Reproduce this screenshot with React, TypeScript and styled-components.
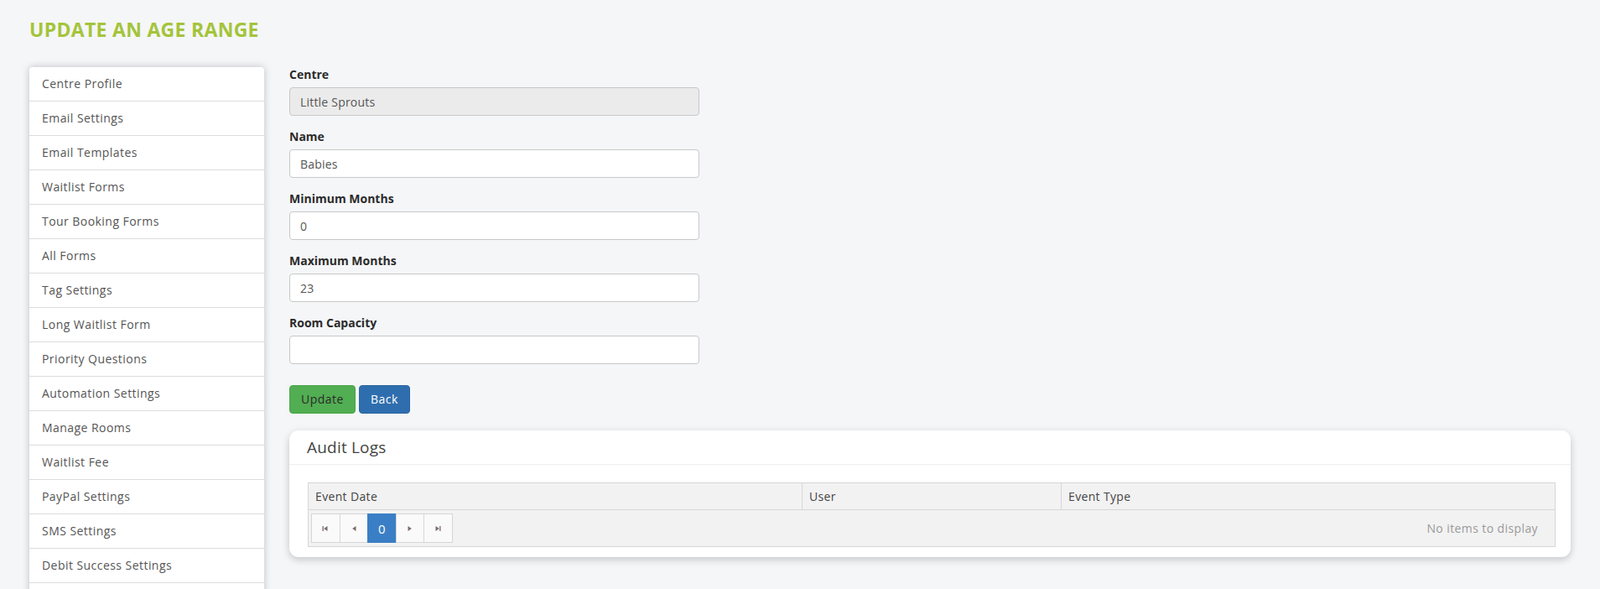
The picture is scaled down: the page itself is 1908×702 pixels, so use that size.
import React from "react";
import styled, { createGlobalStyle } from "styled-components";

const GlobalStyle = createGlobalStyle`
  html, body { margin: 0; padding: 0; }
  body {
    background: #f5f6f8;
    font-family: "Open Sans", "Noto Sans", Arial, sans-serif;
    font-size: 14px;
    color: #333;
  }
  * { box-sizing: border-box; }
`;

const Page = styled.div`
  padding: 0 35px;
`;

const Title = styled.h2`
  margin: 22px 0 32px;
  font-size: 23px;
  line-height: 26px;
  font-weight: 700;
  color: #a4c43a;
  text-transform: uppercase;
  letter-spacing: 0.3px;
`;

const Layout = styled.div`
  display: flex;
  align-items: flex-start;
  gap: 30px;
`;

const SideList = styled.ul`
  flex: 0 0 280px;
  margin: 0;
  padding: 0;
  list-style: none;
  background: #fff;
  border-radius: 4px;
  box-shadow: 0 0 10px rgba(0, 0, 0, 0.22);
`;

const SideItem = styled.li`
  padding: 10px 15px;
  line-height: 20px;
  font-size: 14px;
  letter-spacing: 0.45px;
  color: #555;
  border-bottom: 1px solid #dcdcdc;
  &:first-child { border-radius: 4px 4px 0 0; }
`;

const Main = styled.div`
  flex: 1;
  min-width: 0;
`;

const Form = styled.form`
  width: 489px;
  margin-top: -1px;
`;

const Group = styled.div`
  margin-bottom: 15px;
`;

const Label = styled.label`
  display: block;
  margin-bottom: 5px;
  line-height: 20px;
  font-weight: 700;
  font-size: 14px;
  color: #2b2b2b;
`;

const Input = styled.input`
  display: block;
  width: 100%;
  height: 34px;
  padding: 6px 12px;
  font-family: inherit;
  font-size: 14px;
  letter-spacing: 0.2px;
  color: #555;
  background: ${(p) => (p.disabled ? "#ebebeb" : "#fff")};
  border: 1px solid #c8c8c8;
  border-radius: 4px;
  outline: none;
`;

const Buttons = styled.div`
  display: flex;
  gap: 4px;
  margin-top: 25px;
`;

const Button = styled.button<{ $variant: "success" | "primary" }>`
  height: 34px;
  padding: 6px 13px;
  font-family: inherit;
  font-size: 14px;
  letter-spacing: 0.5px;
  line-height: 20px;
  border-radius: 4px;
  cursor: pointer;
  color: ${(p) => (p.$variant === "success" ? "#2a2a2a" : "#fff")};
  background: ${(p) => (p.$variant === "success" ? "#52ae52" : "#2f6eae")};
  border: 1px solid ${(p) => (p.$variant === "success" ? "#4aa64a" : "#2b66a2")};
`;

const Panel = styled.section`
  margin-top: 20px;
  background: #fff;
  border-radius: 11px;
  box-shadow: 0 3px 10px rgba(0, 0, 0, 0.2);
`;

const PanelHeader = styled.div`
  height: 41px;
  padding: 0 21px;
  display: flex;
  align-items: center;
  font-size: 19px;
  letter-spacing: 0.2px;
  color: #444;
  border-bottom: 1px solid #eeeeee;
`;

const PanelBody = styled.div`
  padding: 21px 18px 12px 22px;
`;

const Grid = styled.div`
  border: 1px solid #d6d6d6;
  background: #f2f2f2;
`;

const HeaderRow = styled.div`
  display: grid;
  grid-template-columns: 588px 309px 1fr;
  border-bottom: 1px solid #d6d6d6;
`;

const HeaderCell = styled.div`
  height: 31px;
  padding: 0 8px;
  display: flex;
  align-items: center;
  font-size: 14px;
  letter-spacing: 0.35px;
  color: #444;
  & + & { border-left: 1px solid #d6d6d6; }
`;

const PagerRow = styled.div`
  display: flex;
  align-items: center;
  justify-content: space-between;
  padding: 4px 20px 4px 3px;
`;

const PagerButtons = styled.div`
  display: flex;
`;

const PageBtn = styled.div<{ $active?: boolean }>`
  width: 34.5px;
  height: 35px;
  display: flex;
  align-items: center;
  justify-content: center;
  font-size: 15px;
  color: ${(p) => (p.$active ? "#fff" : "#7a6b6b")};
  background: ${(p) => (p.$active ? "#3a7fc5" : "#fafafa")};
  border: 1px solid ${(p) => (p.$active ? "#3a7fc5" : "#d6d6d6")};
  & + & { margin-left: -1px; }
`;

const NoItems = styled.div`
  font-size: 14px;
  letter-spacing: 0.4px;
  color: #9a9a9a;
`;

const Tri = ({ dir, bar }: { dir: "l" | "r"; bar?: boolean }) => (
  <svg width="10" height="10" viewBox="0 0 10 10">
    {dir === "l" ? (
      <>
        {bar && <rect x="1.5" y="2" width="1.3" height="6" fill="currentColor" />}
        <polygon points="7.5,2 7.5,8 3.2,5" fill="currentColor" />
      </>
    ) : (
      <>
        <polygon points="2.5,2 2.5,8 6.8,5" fill="currentColor" />
        {bar && <rect x="7.2" y="2" width="1.3" height="6" fill="currentColor" />}
      </>
    )}
  </svg>
);

const menu = [
  "Centre Profile",
  "Email Settings",
  "Email Templates",
  "Waitlist Forms",
  "Tour Booking Forms",
  "All Forms",
  "Tag Settings",
  "Long Waitlist Form",
  "Priority Questions",
  "Automation Settings",
  "Manage Rooms",
  "Waitlist Fee",
  "PayPal Settings",
  "SMS Settings",
  "Debit Success Settings",
  "Xero Settings",
];

export default function App() {
  return (
    <Page>
      <GlobalStyle />
      <Title>Update an Age Range</Title>
      <Layout>
        <SideList>
          {menu.map((m) => (
            <SideItem key={m}>{m}</SideItem>
          ))}
        </SideList>
        <Main>
          <Form onSubmit={(e) => e.preventDefault()}>
            <Group>
              <Label>Centre</Label>
              <Input disabled defaultValue="Little Sprouts" />
            </Group>
            <Group>
              <Label>Name</Label>
              <Input defaultValue="Babies" />
            </Group>
            <Group>
              <Label>Minimum Months</Label>
              <Input defaultValue="0" />
            </Group>
            <Group>
              <Label>Maximum Months</Label>
              <Input defaultValue="23" />
            </Group>
            <Group>
              <Label>Room Capacity</Label>
              <Input defaultValue="" />
            </Group>
            <Buttons>
              <Button type="submit" $variant="success">Update</Button>
              <Button type="button" $variant="primary">Back</Button>
            </Buttons>
          </Form>
          <Panel>
            <PanelHeader>Audit Logs</PanelHeader>
            <PanelBody>
              <Grid>
                <HeaderRow>
                  <HeaderCell>Event Date</HeaderCell>
                  <HeaderCell>User</HeaderCell>
                  <HeaderCell>Event Type</HeaderCell>
                </HeaderRow>
                <PagerRow>
                  <PagerButtons>
                    <PageBtn><Tri dir="l" bar /></PageBtn>
                    <PageBtn><Tri dir="l" /></PageBtn>
                    <PageBtn $active>0</PageBtn>
                    <PageBtn><Tri dir="r" /></PageBtn>
                    <PageBtn><Tri dir="r" bar /></PageBtn>
                  </PagerButtons>
                  <NoItems>No items to display</NoItems>
                </PagerRow>
              </Grid>
            </PanelBody>
          </Panel>
        </Main>
      </Layout>
    </Page>
  );
}
